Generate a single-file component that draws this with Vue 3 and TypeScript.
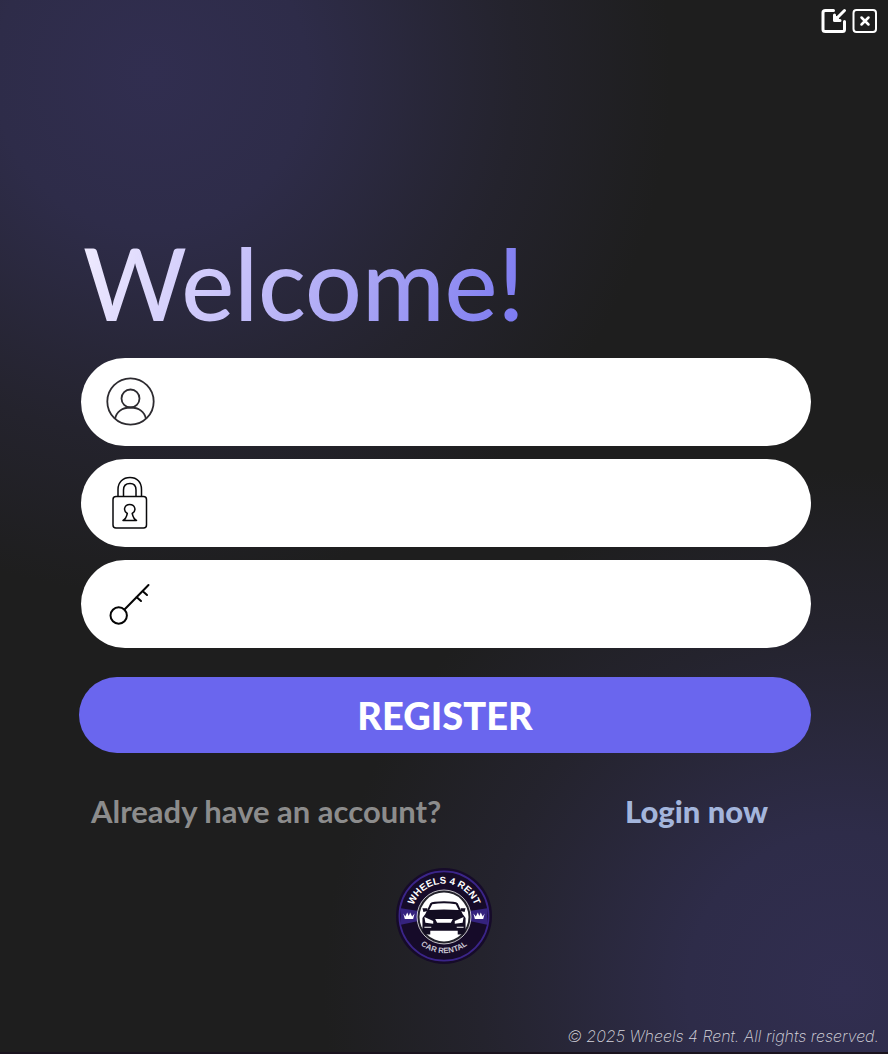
<script setup lang="ts">
import { ref } from 'vue'

const username = ref('')
const password = ref('')
const confirmation = ref('')
</script>

<template>
  <main class="window">
    <header class="controls">
      <button type="button" class="control" aria-label="Minimize">
        <svg viewBox="0 0 26 26" fill="none" stroke="#fff" stroke-width="3" stroke-linecap="round" stroke-linejoin="round">
          <path d="M12.500 2.500H4.500Q2 2.500 2 4.500V21.500Q2 23.500 4.500 23.500H21.500Q23.500 23.500 23.500 21.500V13.500" />
          <path d="M23.500 2.500L13.500 12.500M13.500 7V12.500H19" />
          <path fill="#fff" stroke-width="1" d="M13.500 7V12.500H19Z" />
        </svg>
      </button>
      <button type="button" class="control" aria-label="Close">
        <svg viewBox="0 0 26 26" fill="none" stroke="#fff" stroke-width="2" stroke-linecap="round">
          <rect x="1.500" y="2" width="22.500" height="22" rx="3" />
          <path stroke-width="2.500" d="M9.500 9.500L16.500 16.500M16.500 9.500L9.500 16.500" />
        </svg>
      </button>
    </header>

    <form class="register" @submit.prevent>
      <h1 class="title">Welcome!</h1>

      <div class="fields">
        <label class="field">
          <svg class="icon" viewBox="0 0 50 54" fill="none" stroke="#2d2b30" stroke-width="1.800" aria-hidden="true">
            <circle cx="25.500" cy="26.500" r="23.200" />
            <circle cx="25.500" cy="23.500" r="9" />
            <path d="M10 44C11.500 36.500 17.500 32.500 25.500 32.500S39.500 36.500 41 44" />
          </svg>
          <input v-model="username" type="text" aria-label="Username" autocomplete="username" />
        </label>
        <label class="field">
          <svg class="icon" viewBox="0 0 50 54" fill="none" stroke="#09090b" stroke-width="1.500" stroke-linejoin="round" aria-hidden="true">
            <rect x="8" y="20.500" width="33.500" height="31.500" rx="3" />
            <path d="M13 20.500V13.500C13 6 18 1.500 25 1.500S36.500 6 36.500 13.500V20.500" />
            <path d="M18.500 20.500V14C18.500 10 21 7.500 25 7.500S31 10 31 14V20.500" />
            <path d="M22.300 37.500C17.500 34.500 19.500 28.500 24.700 28.500S32 34.500 27.200 37.500C28 41 29.500 43.500 31.500 44.500H18C20 43.500 21.500 41 22.300 37.500Z" />
          </svg>
          <input v-model="password" type="password" aria-label="Password" autocomplete="new-password" />
        </label>
        <label class="field">
          <svg class="icon" viewBox="0 0 50 54" fill="none" stroke="#050505" stroke-width="2" stroke-linecap="round" aria-hidden="true">
            <circle cx="13.700" cy="38.500" r="8.200" />
            <path d="M19.500 32.500L43.500 8M31.500 20L36 24M37.500 14L42 18" />
          </svg>
          <input v-model="confirmation" type="password" aria-label="Confirm password" autocomplete="new-password" />
        </label>
      </div>

      <button type="submit" class="submit">REGISTER</button>

      <div class="switch">
        <span>Already have an account?</span>
        <a href="#login">Login now</a>
      </div>
    </form>

    <svg class="logo" viewBox="0 0 100 100" role="img" aria-label="Wheels 4 Rent">
      <defs>
        <path id="arc-top" d="M17 50A33 33 0 0 1 83 50" />
        <path id="arc-bottom" d="M12 50A38 38 0 0 0 88 50" />
      </defs>
      <circle cx="50" cy="50" r="49" fill="#160b29" />
      <circle cx="50" cy="50" r="45.500" fill="none" stroke="#3b2589" stroke-width="1.800" />
      <path d="M6 42L24 45V55L6 59ZM94 42L76 45V55L94 59Z" fill="#35237e" />
      <circle cx="50" cy="51" r="27.500" fill="#22212a" stroke="#f2f0f4" stroke-width="0.800" />
      <circle cx="50" cy="51" r="25" fill="#fff" />
      <path d="M8.500 47.500L10.500 50.500L12.500 46.500L14 50L15.500 46.500L17.500 50.500L20 47.500L18.500 53H10ZM91.500 47.500L89.500 50.500L87.500 46.500L86 50L84.500 46.500L82.500 50.500L80 47.500L81.500 53H90Z" fill="#fff" />
      <path d="M31 48L36 37Q38 35 50 35T64 37L69 48L72 52V65L70 69H64V65H36V69H30L28 65V52Z" fill="#130d22" />
      <path d="M35 44L38 38Q50 36 62 38L65 44Q50 42.500 35 44Z" fill="#fff" />
      <path d="M28 42H33V45L29 46ZM72 42H67V45L71 46Z" fill="#130d22" />
      <path d="M30 51L39 55V58L31 57ZM70 51L61 55V58L69 57ZM41 53H59L57 57H43ZM30 61H37V62H30ZM63 61H70V62H63Z" fill="#fff" />
      <text class="logo-name" text-anchor="middle"><textPath href="#arc-top" startOffset="50%">WHEELS 4 RENT</textPath></text>
      <text class="logo-tagline" text-anchor="middle"><textPath href="#arc-bottom" startOffset="50%">CAR RENTAL</textPath></text>
    </svg>

    <footer class="copyright">© 2025 Wheels 4 Rent. All rights reserved.</footer>
  </main>
</template>

<style>
body {
  margin: 0;
  background: #1e1e1e;
}
</style>

<style scoped>
* {
  box-sizing: border-box;
}

.window {
  display: flex;
  flex-direction: column;
  min-height: 100vh;
  border-bottom: 2px solid #1a131e;
  background:
    radial-gradient(circle 520px at 17% 7%, #312e50 0%, #2e2c49 30%, #24232d 70%, transparent 100%),
    radial-gradient(circle 520px at 95% 94%, #312e50 0%, #2e2c49 30%, #24232d 70%, transparent 100%),
    #1e1e1e;
  font-family: Lato, "Liberation Sans", sans-serif;
}

.controls {
  display: flex;
  justify-content: flex-end;
  gap: 5px;
  padding: 8px 10px 0;
}

.control {
  width: 26px;
  height: 26px;
  padding: 0;
  border: 0;
  background: none;
  cursor: pointer;
}

.control svg {
  display: block;
}

.register {
  margin: 192px 77px 0 79px;
}

.title {
  width: fit-content;
  margin: 0 0 0 4px;
  background: linear-gradient(110deg, #f1edff, #c5bff9 38%, #a6a2f4 65%, #7977f0);
  background-clip: text;
  color: transparent;
  font-size: 100px;
  font-weight: 500;
  line-height: 112px;
}

.fields {
  display: grid;
  gap: 13px;
  margin: 20px 0 29px 2px;
}

.field {
  display: flex;
  align-items: center;
  gap: 16px;
  height: 88px;
  padding: 0 40px 0 24px;
  border-radius: 44px;
  background: #fff;
}

.icon {
  flex: none;
  width: 50px;
  height: 54px;
}

.field input {
  flex: 1;
  min-width: 0;
  height: 60px;
  border: 0;
  outline: 0;
  background: transparent;
  color: #1e1e1e;
  font: 28px Lato, sans-serif;
}

.submit {
  display: block;
  width: 100%;
  height: 76px;
  padding: 0;
  border: 0;
  border-radius: 38px;
  background: #6a66ee;
  color: #fff;
  font: 900 38px/76px Lato, sans-serif;
  cursor: pointer;
}

.switch {
  display: flex;
  justify-content: space-between;
  margin: 40px 43px 0 12px;
  color: #8c8c8c;
  font-size: 31px;
  font-weight: 700;
  line-height: 36px;
}

.switch a {
  color: #a3b5dc;
  font-weight: 900;
  text-decoration: none;
}

.logo {
  align-self: center;
  width: 98px;
  height: 98px;
  margin-top: 38px;
}

.logo-name {
  fill: #fff;
  font: 700 10px "Liberation Sans Narrow", "Liberation Sans", sans-serif;
}

.logo-tagline {
  fill: #c9c5d2;
  font: 700 8px "Liberation Sans Narrow", "Liberation Sans", sans-serif;
}

.copyright {
  margin-top: auto;
  padding: 0 9px 4px;
  color: #d5d4dc;
  font: italic 200 16px/24px Inter, sans-serif;
  text-align: right;
}
</style>
